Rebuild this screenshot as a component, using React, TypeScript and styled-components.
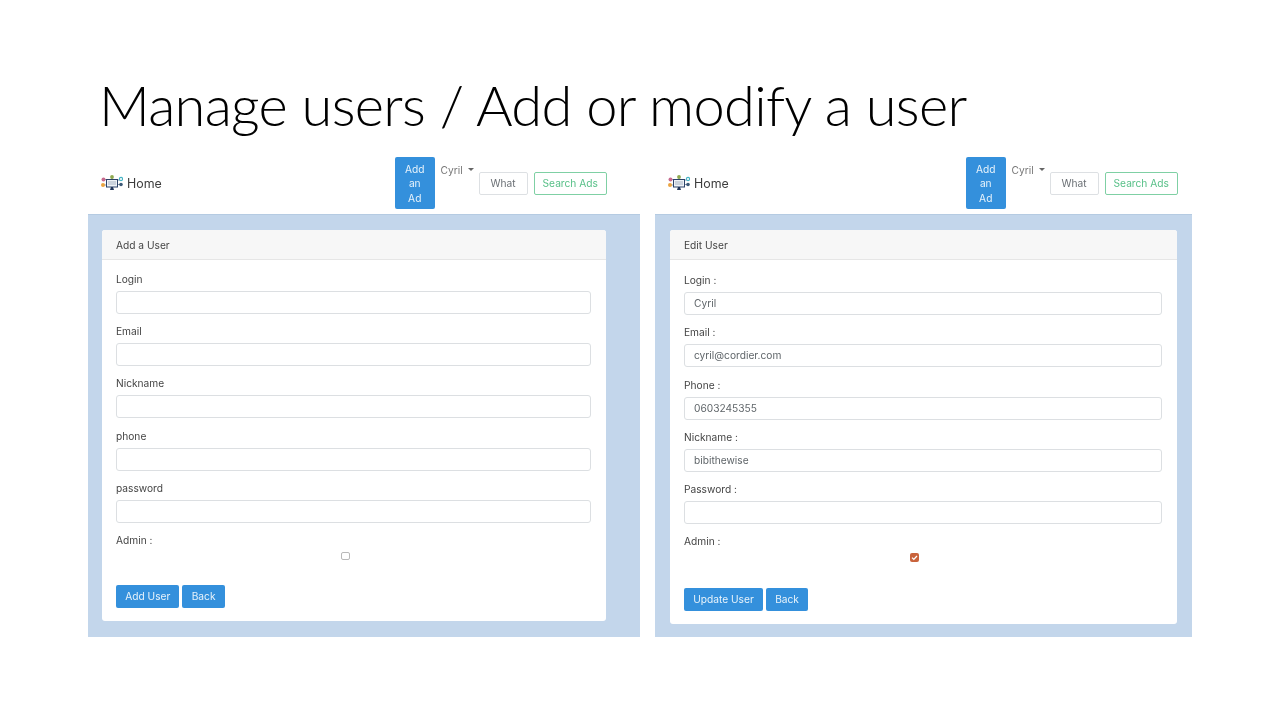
import { createGlobalStyle } from "styled-components";
import styled from "styled-components";

const GlobalStyle = createGlobalStyle`
  html, body {
    margin: 0;
    background: #fff;
  }
`;

const Slide = styled.div`
  width: 1280px;
  height: 720px;
  overflow: hidden;
  background: #fff;
`;

const Title = styled.h1`
  margin: 0;
  padding: 70px 0 0 99px;
  height: 80px;
  font-family: Lato, "Liberation Sans", sans-serif;
  font-weight: 300;
  font-size: 56px;
  line-height: 70px;
  letter-spacing: -0.7px;
  color: #000;
  white-space: nowrap;
`;

const Panels = styled.div`
  display: flex;
  gap: 15px;
  padding-left: 88px;
  filter: blur(0.4px);
  font-family: Inter, "Noto Sans", sans-serif;
  font-size: 10.2px;
  color: #444;
`;

const Panel = styled.section<{ $width: number }>`
  width: ${(p) => p.$width}px;
  display: flex;
  flex-direction: column;
`;

const Navbar = styled.nav<{ $right: number }>`
  box-sizing: border-box;
  height: 64px;
  display: flex;
  align-items: center;
  padding: 2px ${(p) => p.$right}px 0 13px;
`;

const Brand = styled.a`
  display: flex;
  align-items: center;
  gap: 4px;
  font-size: 12.4px;
  color: #3c3c3c;
  margin-right: auto;
`;

const AddAd = styled.button`
  width: 39.5px;
  height: 52px;
  border: 0;
  border-radius: 2px;
  padding: 1px 0 0;
  background: #3490dc;
  color: #e8f3fb;
  font: inherit;
  line-height: 14.4px;
`;

const UserMenu = styled.div`
  align-self: flex-start;
  width: 32px;
  margin: 12px 6px 0 6px;
  color: #777;
  white-space: nowrap;
  display: flex;
  align-items: center;
  gap: 5px;
`;

const Caret = styled.span`
  width: 0;
  height: 0;
  margin-top: -2px;
  border-left: 3px solid transparent;
  border-right: 3px solid transparent;
  border-top: 3px solid #666;
`;

const What = styled.div`
  box-sizing: border-box;
  width: 49px;
  height: 23px;
  border: 1px solid #dde0e3;
  border-radius: 2px;
  display: flex;
  align-items: center;
  justify-content: center;
  color: #6b7075;
`;

const SearchButton = styled.button`
  box-sizing: border-box;
  width: 73.5px;
  height: 23px;
  margin-left: 6px;
  padding: 0;
  border: 1px solid #7fd0a4;
  border-radius: 2px;
  background: #fff;
  color: #58c088;
  font: inherit;
`;

const Content = styled.div<{ $left: number; $right: number }>`
  height: 423px;
  box-sizing: border-box;
  background: #c3d6eb;
  border-top: 1px solid #b5cbe2;
  padding: 15px ${(p) => p.$right}px 0 ${(p) => p.$left}px;
`;

const Card = styled.div<{ $height: number }>`
  box-sizing: border-box;
  height: ${(p) => p.$height}px;
  background: #fff;
  border-radius: 3px;
`;

const CardHeader = styled.header`
  box-sizing: border-box;
  height: 30px;
  display: flex;
  align-items: center;
  padding: 0 14px;
  background: #f7f7f7;
  border-bottom: 1px solid #e6e6e6;
  border-radius: 3px 3px 0 0;
  color: #444;
`;

const CardBody = styled.div<{ $top: number }>`
  padding: ${(p) => p.$top}px 15px 0 14px;
`;

const Field = styled.div<{ $height: number }>`
  height: ${(p) => p.$height}px;
`;

const Label = styled.label`
  display: block;
  height: 18px;
  line-height: 12px;
  color: #444;
`;

const Input = styled.div`
  box-sizing: border-box;
  height: 23px;
  border: 1px solid #dcdfe2;
  border-radius: 3px;
  padding: 0 9px;
  line-height: 21px;
  color: #5f6569;
`;

const CheckRow = styled.div<{ $top: number }>`
  display: flex;
  justify-content: center;
  padding: ${(p) => p.$top}px 17px 0 0;
`;

const EmptyCheck = styled.span`
  box-sizing: border-box;
  width: 9px;
  height: 8px;
  border: 1px solid #b9b9b9;
  border-radius: 2px;
`;

const CheckedBox = styled.span`
  width: 9px;
  height: 9px;
  border-radius: 2px;
  background: #c9633c;
  display: flex;
`;

const Actions = styled.div<{ $top: number }>`
  display: flex;
  gap: 3px;
  margin-top: ${(p) => p.$top}px;
`;

const ActionButton = styled.button`
  height: 23px;
  padding: 0 9.2px;
  border: 0;
  border-radius: 2px;
  background: #3490dc;
  color: #e8f3fb;
  font: inherit;
`;

function Logo() {
  return (
    <svg width="22" height="16" viewBox="0 0 22 16">
      <g stroke="#7f90a8" strokeWidth="0.9" fill="none">
        <path d="M3 4.5h4M3 10h4M15 5h4M15 9.5h4M11 3v2" />
      </g>
      <rect x="5.5" y="4.5" width="11" height="7.5" fill="#eef2f7" stroke="#2c4268" strokeWidth="1" />
      <path d="M7 7h8M7 9h8" stroke="#94a3b6" strokeWidth="0.8" />
      <path d="M9 15h4l-1-3h-2z" fill="#22375c" />
      <circle cx="2.5" cy="4.5" r="2" fill="#c76b8e" />
      <circle cx="2" cy="10" r="2" fill="#eba441" />
      <circle cx="11" cy="2" r="1.9" fill="#8fa94f" />
      <circle cx="20" cy="4" r="1.6" fill="#fff" stroke="#45b3c4" strokeWidth="1.1" />
      <circle cx="20" cy="9.5" r="1.8" fill="#3d5a78" />
    </svg>
  );
}

function Nav({ right }: { right: number }) {
  return (
    <Navbar $right={right}>
      <Brand>
        <Logo />
        Home
      </Brand>
      <AddAd>
        Add
        <br />
        an
        <br />
        Ad
      </AddAd>
      <UserMenu>
        Cyril <Caret />
      </UserMenu>
      <What>What</What>
      <SearchButton>Search Ads</SearchButton>
    </Navbar>
  );
}

const addFields = ["Login", "Email", "Nickname", "phone", "password"];
const editFields = [
  ["Login :", "Cyril"],
  ["Email :", "cyril@cordier.com"],
  ["Phone :", "0603245355"],
  ["Nickname :", "bibithewise"],
  ["Password :", ""],
];

export default function App() {
  return (
    <Slide>
      <GlobalStyle />
      <Title>Manage users / Add or modify a user</Title>
      <Panels>
        <Panel $width={552}>
          <Nav right={33} />
          <Content $left={14} $right={34}>
            <Card $height={391}>
              <CardHeader>Add a User</CardHeader>
              <CardBody $top={13}>
                {addFields.map((label) => (
                  <Field key={label} $height={52.2}>
                    <Label>{label}</Label>
                    <Input />
                  </Field>
                ))}
                <Label>Admin :</Label>
                <CheckRow $top={0}>
                  <EmptyCheck />
                </CheckRow>
                <Actions $top={25}>
                  <ActionButton>Add User</ActionButton>
                  <ActionButton>Back</ActionButton>
                </Actions>
              </CardBody>
            </Card>
          </Content>
        </Panel>
        <Panel $width={537}>
          <Nav right={14} />
          <Content $left={15} $right={15}>
            <Card $height={394}>
              <CardHeader>Edit User</CardHeader>
              <CardBody $top={14}>
                {editFields.map(([label, value]) => (
                  <Field key={label} $height={52.3}>
                    <Label>{label}</Label>
                    <Input>{value}</Input>
                  </Field>
                ))}
                <Label>Admin :</Label>
                <CheckRow $top={0}>
                  <CheckedBox>
                    <svg width="9" height="9" viewBox="0 0 9 9">
                      <path d="M2 4.6l1.8 1.8L7 3" fill="none" stroke="#fff" strokeWidth="1.3" />
                    </svg>
                  </CheckedBox>
                </CheckRow>
                <Actions $top={25.5}>
                  <ActionButton>Update User</ActionButton>
                  <ActionButton>Back</ActionButton>
                </Actions>
              </CardBody>
            </Card>
          </Content>
        </Panel>
      </Panels>
    </Slide>
  );
}
